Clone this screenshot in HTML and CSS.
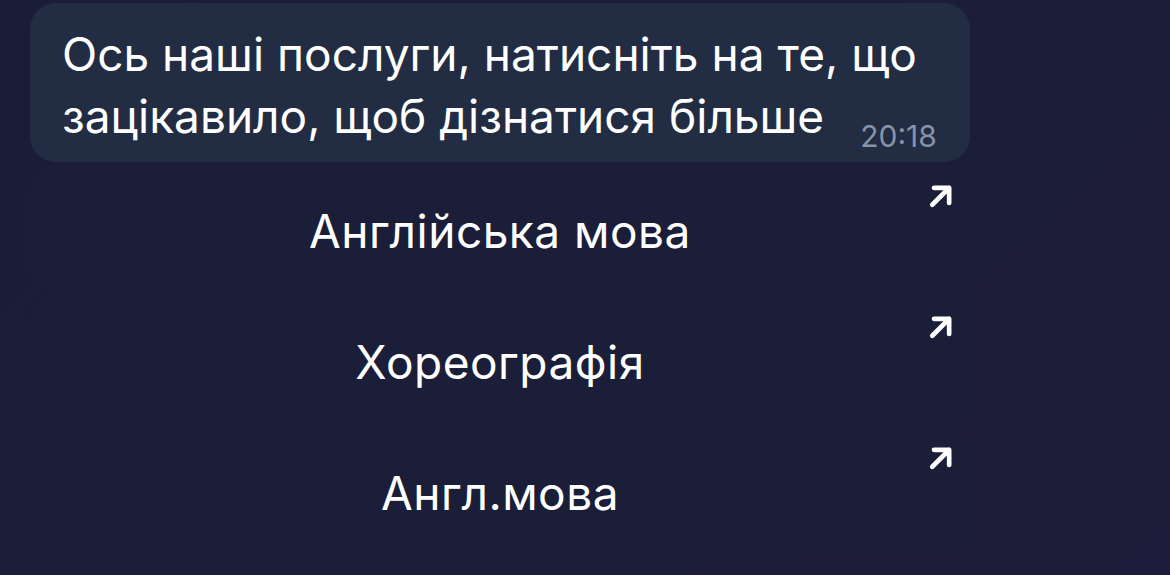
FILE: index.html
```html
<!DOCTYPE html>
<html lang="uk">
<head>
<meta charset="utf-8">
<link rel="stylesheet" href="styles.css">
</head>
<body>
<div class="chat">
  <div class="bubble">
    <p class="msg">Ось наші послуги, натисніть на те, що зацікавило, щоб дізнатися більше<span class="time">20:18</span></p>
  </div>
  <div class="buttons">
    <div class="btn"><span class="label">Англійська мова</span><svg class="arrow" viewBox="0 0 24 24"><path d="M4.5 19.5L19 5M6 5H19V18" /></svg></div>
    <div class="btn"><span class="label">Хореографія</span><svg class="arrow" viewBox="0 0 24 24"><path d="M4.5 19.5L19 5M6 5H19V18" /></svg></div>
    <div class="btn"><span class="label">Англ.мова</span><svg class="arrow" viewBox="0 0 24 24"><path d="M4.5 19.5L19 5M6 5H19V18" /></svg></div>
  </div>
</div>
</body>
</html>
```
FILE: styles.css
```css
html, body {
  margin: 0;
  padding: 0;
  height: 100%;
}
body {
  background: linear-gradient(135deg, #1b1d38 0%, #1b1d39 60%, #1e1c3a 100%);
  font-family: Inter, Roboto, "Noto Sans", sans-serif;
  color: #ffffff;
  overflow: hidden;
}
.chat {
  width: 940px;
  padding: 3px 0 0 30px;
  display: flex;
  flex-direction: column;
}
.bubble {
  background: #222d43;
  border-radius: 26px;
  padding: 20px 32px 18px 32px;
  height: 121px;
}
.msg {
  margin: 0;
  font-size: 46px;
  line-height: 62px;
}
.time {
  display: inline-block;
  margin-left: 36px;
  font-size: 30px;
  line-height: 30px;
  vertical-align: -14px;
  color: #8793a8;
}
.buttons {
  display: flex;
  flex-direction: column;
  gap: 6px;
  margin-top: 4px;
}
.btn {
  position: relative;
  height: 125px;
  border-radius: 24px;
  background: #1a1e39;
  display: flex;
  align-items: center;
  justify-content: center;
  padding-top: 5px;
  box-sizing: border-box;
}
.label {
  font-size: 46px;
  letter-spacing: 0.5px;
}
.arrow {
  position: absolute;
  top: 16px;
  right: 15px;
  width: 28px;
  height: 28px;
  fill: none;
  stroke: #ffffff;
  stroke-width: 4;
  stroke-linecap: round;
  stroke-linejoin: round;
}
```
